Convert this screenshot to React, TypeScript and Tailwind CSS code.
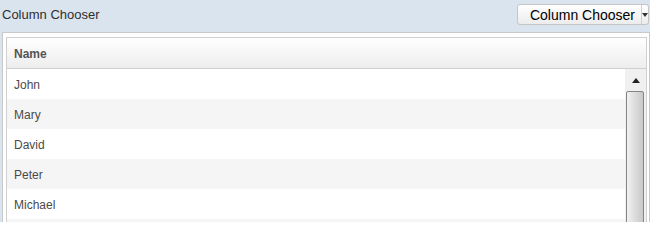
import React from "react";

const names = ["John", "Mary", "David", "Peter", "Michael"];

export default function App() {
  return (
    <div
      className="w-[650px] h-[222px] overflow-hidden bg-[#dae4ee] flex flex-col"
      style={{ fontFamily: '"Liberation Sans", Arial, sans-serif' }}
    >
      <div className="h-[32px] flex items-center justify-between pl-[2px] pr-[1px] shrink-0">
        <span className="text-[13px] text-[#2e2e2e] leading-none -mt-[3px]">Column Chooser</span>
        <div className="h-[21px] -mt-[3px] flex border border-[#c6c6c6] rounded-[3px] bg-gradient-to-b from-white to-[#ececec]">
          <div className="pl-[12px] pr-[6px] flex items-center text-[14px] text-black leading-none">
            Column Chooser
          </div>
          <div className="w-[7px] border-l border-[#d0d0d0] flex items-center justify-center">
            <div className="w-0 h-0 border-l-[3px] border-r-[3px] border-t-[4px] border-l-transparent border-r-transparent border-t-[#333]" />
          </div>
        </div>
      </div>
      <div className="h-[240px] shrink-0 ml-[2px] border border-[#c9c9c9] bg-white pl-[3px] pr-[2px] pt-[4px] flex flex-col">
        <div className="flex-1 border border-[#d0d0d0] flex flex-col">
          <div className="h-[31px] shrink-0 border-b border-[#d0d0d0] bg-gradient-to-b from-white to-[#ededed] flex items-center pl-[7px] pt-[1px]">
            <span className="text-[12px] font-bold text-[#555]">Name</span>
          </div>
          <div className="flex flex-1">
            <div className="flex-1 flex flex-col">
              {names.map((n, i) => (
                <div
                  key={n}
                  className={
                    "h-[30px] shrink-0 flex items-center pl-[7px] pt-[2px] text-[12px] text-[#4a4a4a] " +
                    (i % 2 === 1 ? "bg-[#f5f5f5]" : "bg-white")
                  }
                >
                  {n}
                </div>
              ))}
              <div className="h-[30px] shrink-0 bg-[#f5f5f5]" />
            </div>
            <div className="w-[21px] shrink-0 bg-[#f0f0f0] flex flex-col">
              <div className="h-[22px] shrink-0 flex items-center justify-center">
                <div className="w-0 h-0 border-l-[4px] border-r-[4px] border-b-[5px] border-l-transparent border-r-transparent border-b-[#222] mt-[1px]" />
              </div>
              <div className="ml-[1px] w-[18px] h-[160px] shrink-0 border border-[#858585] rounded-t-[2px] bg-gradient-to-r from-[#f2f2f2] via-[#dcdcdc] to-[#c9c9c9]" />
            </div>
          </div>
        </div>
      </div>
    </div>
  );
}
